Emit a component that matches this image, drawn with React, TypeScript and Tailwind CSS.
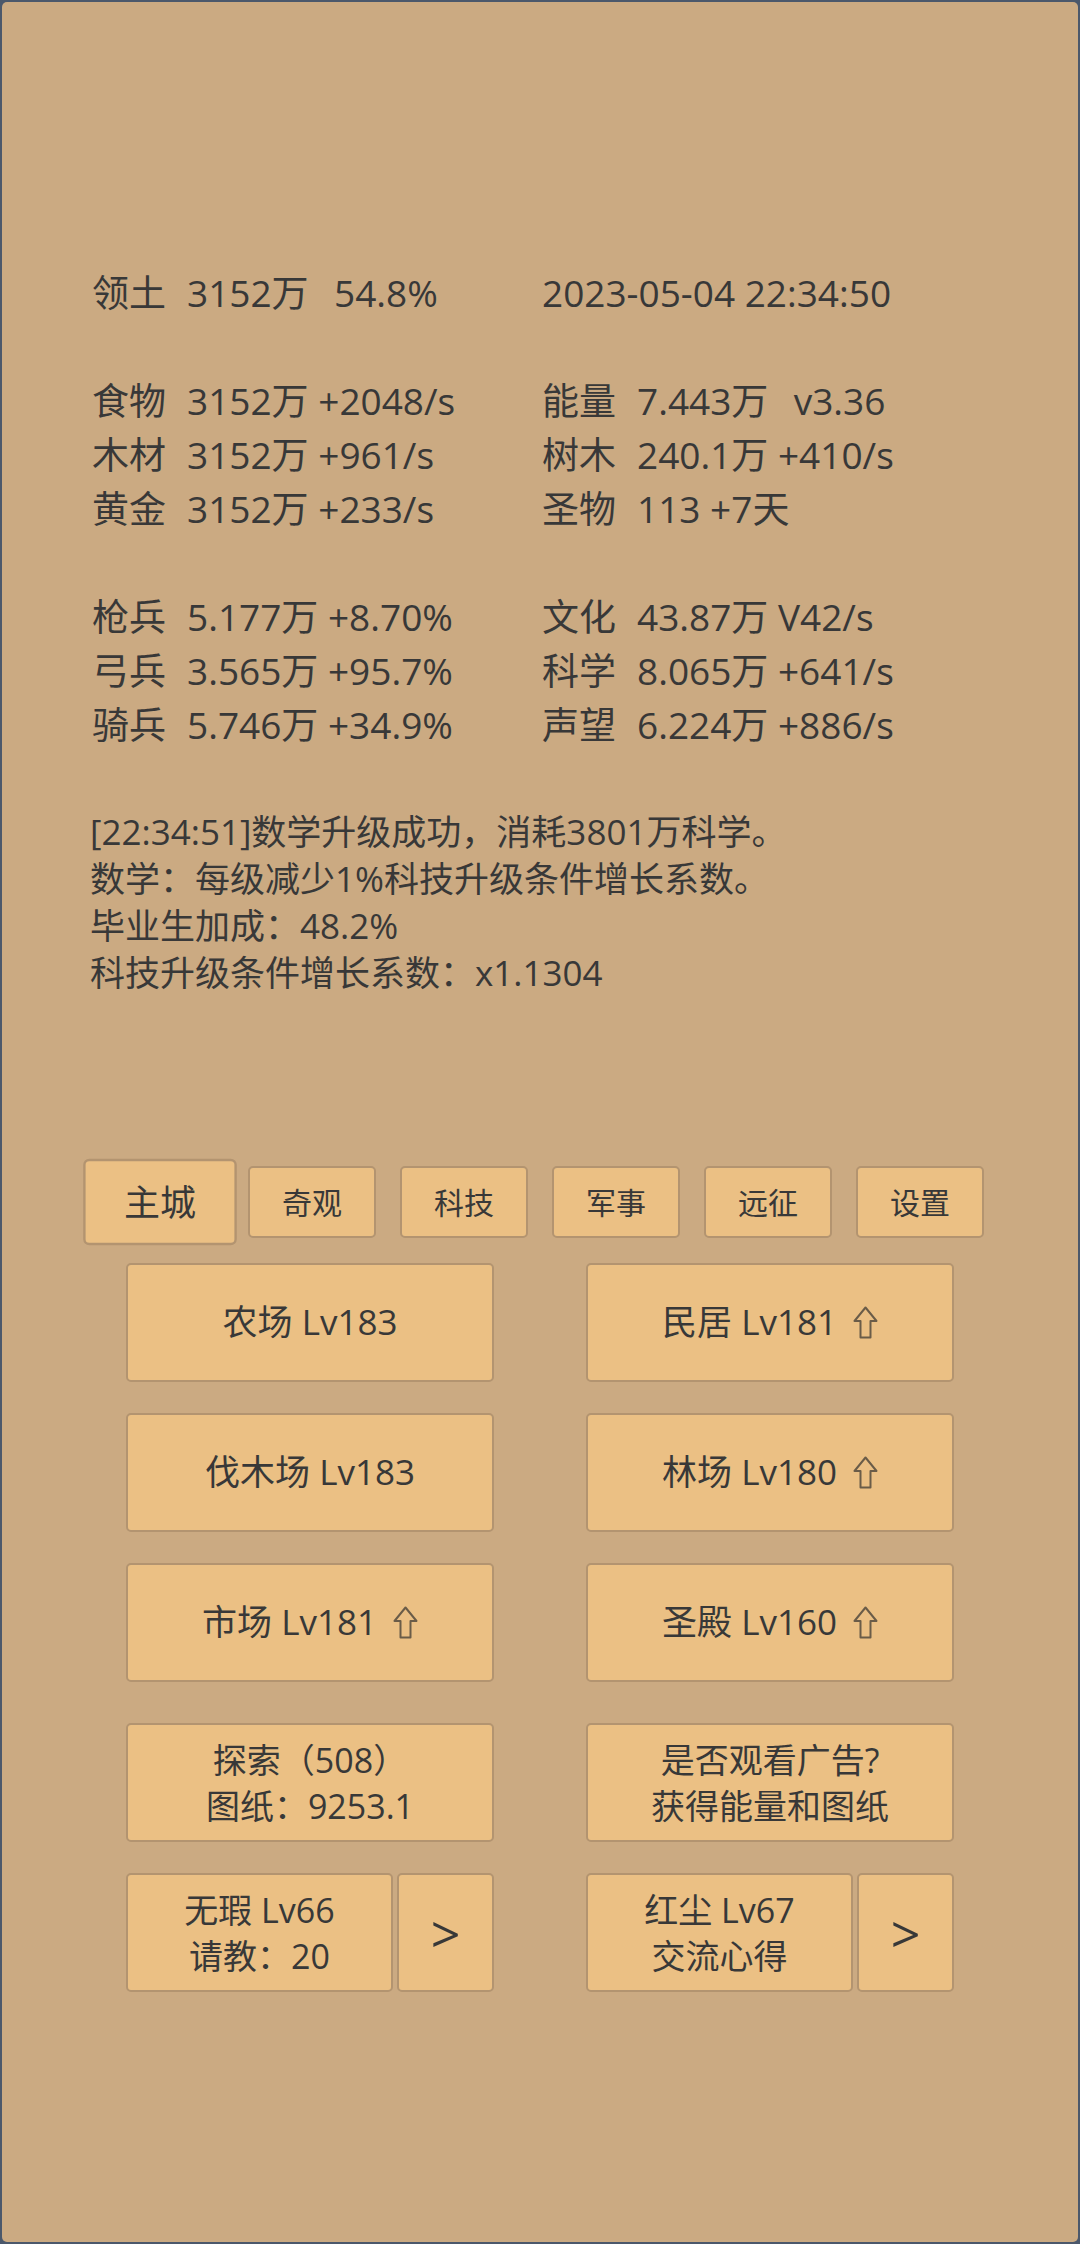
import React from 'react';

const stats: [string, string][][] = [
  [['领土', '3152万  \u200954.8%'], ['', '2023-05-04 22:34:50']],
  [],
  [['食物', '3152万 +2048/s'], ['能量', '7.443万  \u2009v3.36']],
  [['木材', '3152万 +961/s'], ['树木', '240.1万 +410/s']],
  [['黄金', '3152万 +233/s'], ['圣物', '113 +7天']],
  [],
  [['枪兵', '5.177万 +8.70%'], ['文化', '43.87万 V42/s']],
  [['弓兵', '3.565万 +95.7%'], ['科学', '8.065万 +641/s']],
  [['骑兵', '5.746万 +34.9%'], ['声望', '6.224万 +886/s']],
];

const messages = [
  '[22:34:51]数学升级成功，消耗3801万科学。',
  '数学：每级减少1%科技升级条件增长系数。',
  '毕业生加成：48.2%',
  '科技升级条件增长系数：x1.1304',
];

const tabs = ['主城', '奇观', '科技', '军事', '远征', '设置'];

const buildings = [
  { name: '农场 Lv183', up: false },
  { name: '民居 Lv181', up: true },
  { name: '伐木场 Lv183', up: false },
  { name: '林场 Lv180', up: true },
  { name: '市场 Lv181', up: true },
  { name: '圣殿 Lv160', up: true },
];

const btn =
  'flex items-center justify-center rounded-[5px] border-2 border-[#b39470] bg-[#ebc084] text-[#383838]';

const UpArrow = () => (
  <svg width="25" height="33" viewBox="0 0 25 33" className="ml-[16px]">
    <path
      d="M12.5 1.5 L23.5 15 L17.5 15 L17.5 31.5 L7.5 31.5 L7.5 15 L1.5 15 Z"
      fill="none"
      stroke="#6a5c48"
      strokeWidth="2"
      strokeLinejoin="round"
    />
  </svg>
);

const Stat = ({ item }: { item?: string[] }) => {
  if (!item) return <span />;
  const [label, value] = item;
  return (
    <span className="flex whitespace-pre">
      {label ? <span className="w-[95px] shrink-0">{label}</span> : null}
      <span>{value}</span>
    </span>
  );
};

const App = () => {
  return (
    <div className="w-[1080px] h-[2244px] bg-[#4b586b] p-[2px] font-['Open_Sans','Noto_Sans_CJK_SC',sans-serif]">
      <div className="h-full rounded-[5px] bg-[#cbaa82] text-[#383838] flex flex-col">
        {/* Resource stats */}
        <div className="pt-[264px] pl-[90px] text-[37px] leading-[54px]">
          {stats.map((row, i) => (
            <div key={i} className="grid grid-cols-[450px_1fr] h-[54px]">
              <Stat item={row[0]} />
              <Stat item={row[1]} />
            </div>
          ))}
        </div>

        {/* Log */}
        <div className="mt-[56px] pl-[88px] text-[35px] leading-[47px] whitespace-pre">
          {messages.map((m, i) => (
            <div key={i}>{m}</div>
          ))}
        </div>

        {/* Tabs */}
        <div className="mt-[170px] pl-[94px] flex gap-[24px]">
          {tabs.map((t, i) => (
            <div
              key={t}
              className={`${btn} w-[128px] h-[72px] text-[30px] ${i === 0 ? 'scale-[1.2]' : ''}`}
            >
              {t}
            </div>
          ))}
        </div>

        {/* Buildings */}
        <div className="mt-[25px] pl-[124px] grid grid-cols-[368px_368px] gap-x-[92px] gap-y-[31px]">
          {buildings.map((b) => (
            <div key={b.name} className={`${btn} h-[119px] text-[35px]`}>
              <span>{b.name}</span>
              {b.up && <UpArrow />}
            </div>
          ))}
        </div>

        {/* Explore / ad / mentors */}
        <div className="mt-[41px] pl-[124px] grid grid-cols-[368px_368px] gap-x-[92px] gap-y-[31px] text-[34px] leading-[46px]">
          <div className={`${btn} h-[119px] flex-col`}>
            <span>探索（508）</span>
            <span>图纸：9253.1</span>
          </div>
          <div className={`${btn} h-[119px] flex-col`}>
            <span>是否观看广告?</span>
            <span>获得能量和图纸</span>
          </div>
          <div className="flex gap-[4px]">
            <div className={`${btn} h-[119px] w-[267px] flex-col`}>
              <span>无瑕 Lv66</span>
              <span>请教：20</span>
            </div>
            <div className={`${btn} h-[119px] flex-1 text-[52px]`}>&gt;</div>
          </div>
          <div className="flex gap-[4px]">
            <div className={`${btn} h-[119px] w-[267px] flex-col`}>
              <span>红尘 Lv67</span>
              <span>交流心得</span>
            </div>
            <div className={`${btn} h-[119px] flex-1 text-[52px]`}>&gt;</div>
          </div>
        </div>
      </div>
    </div>
  );
};

export default App;
